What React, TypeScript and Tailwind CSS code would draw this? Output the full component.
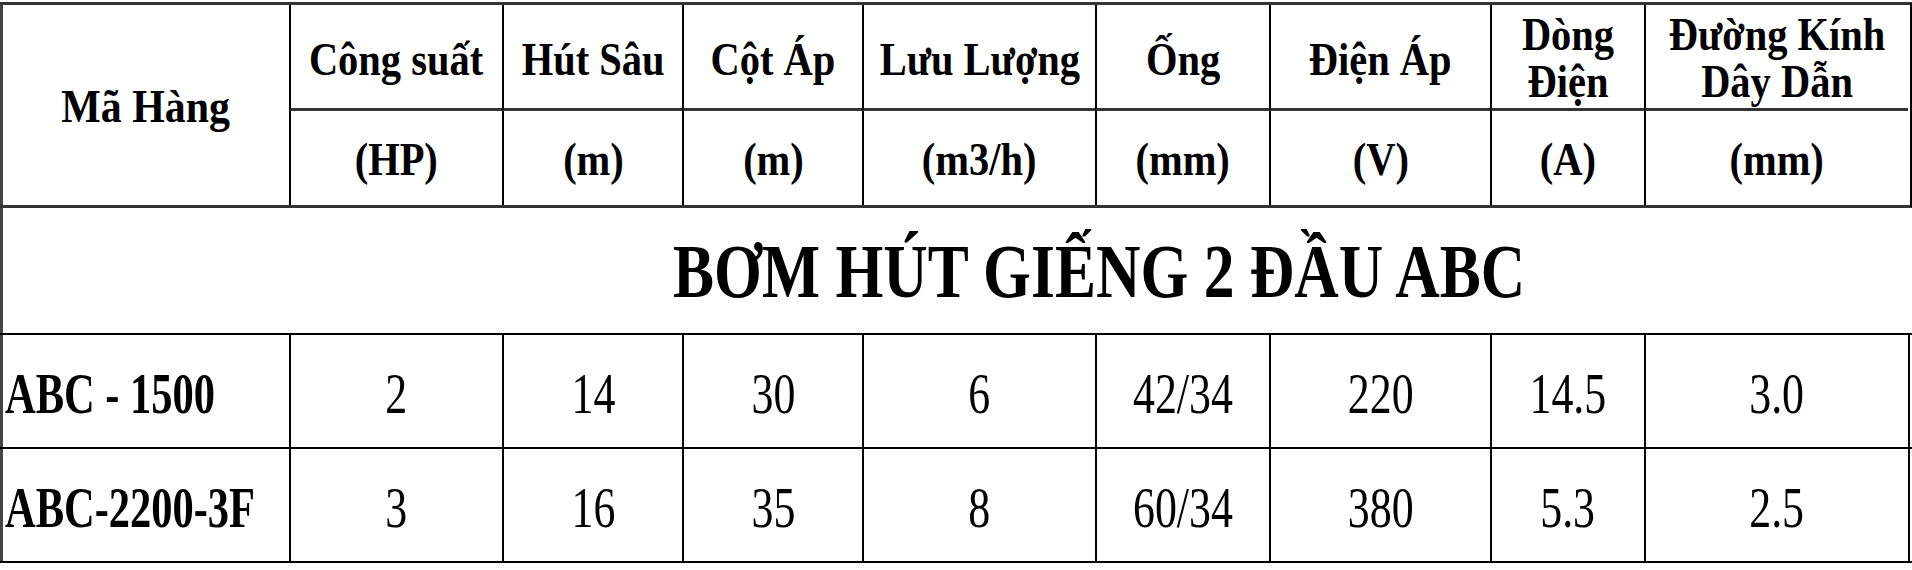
const heads = [
  { name: "Công suất", unit: "(HP)" },
  { name: "Hút Sâu", unit: "(m)" },
  { name: "Cột Áp", unit: "(m)" },
  { name: "Lưu Lượng", unit: "(m3/h)" },
  { name: "Ống", unit: "(mm)" },
  { name: "Điện Áp", unit: "(V)" },
  { name: "Dòng Điện", unit: "(A)", twoLines: true },
  { name: "Đường Kính Dây Dẫn", unit: "(mm)", twoLines: true },
];

const rows = [
  { code: "ABC - 1500", vals: ["2", "14", "30", "6", "42/34", "220", "14.5", "3.0"] },
  { code: "ABC-2200-3F", vals: ["3", "16", "35", "8", "60/34", "380", "5.3", "2.5"] },
];

function HeadText({ children, tall }: { children: React.ReactNode; tall?: boolean }) {
  return (
    <span
      className={`inline-block scale-x-[0.88] text-center text-[46px] font-bold ${tall ? "leading-[47px]" : "leading-[48px]"}`}
    >
      {children}
    </span>
  );
}

export default function App() {
  return (
    <div className="h-[570px] w-[1912px] overflow-hidden bg-white font-['Liberation_Serif',serif] text-black">
      {/* header */}
      <div className="mt-[2px] grid grid-cols-[289px_213px_180px_180px_233px_174px_221px_154px_264px] grid-rows-[106px_94px] border-t-[3px] border-r-2 border-b-[3px] border-[#333] border-r-black">
        <div className="row-span-2 flex items-center justify-center border-l-[3px] border-[#444] pt-[4px]">
          <span className="inline-block scale-x-[0.91] text-[46px] font-bold leading-[48px]">Mã Hàng</span>
        </div>
        {heads.map((h, i) => (
          <div
            key={i}
            className={`flex items-center justify-center border-b-[3px] border-l-2 border-b-[#333] border-l-black ${h.twoLines ? "pt-[2px]" : "pt-[6px]"}`}
          >
            <HeadText tall={h.twoLines}>
              {h.twoLines ? (
                <>
                  {h.name.split(" ").slice(0, 2).join(" ")}
                  <br />
                  {h.name.split(" ").slice(2).join(" ")}
                </>
              ) : (
                h.name
              )}
            </HeadText>
          </div>
        ))}
        {heads.map((h, i) => (
          <div key={i} className="flex items-center justify-center border-l-2 border-black pt-[4px]">
            <HeadText>{h.unit}</HeadText>
          </div>
        ))}
      </div>

      {/* title */}
      <div className="grid h-[127px] grid-cols-[289px_1621px] border-b-2 border-black">
        <div className="border-l-[3px] border-[#444]" />
        <div className="flex items-center justify-center">
          <span className="inline-block scale-x-[0.81] text-[76px] font-bold leading-none">
            BƠM HÚT GIẾNG 2 ĐẦU ABC
          </span>
        </div>
      </div>

      {/* data */}
      {rows.map((r, i) => (
        <div
          key={i}
          className="grid h-[114px] grid-cols-[289px_213px_180px_180px_233px_174px_221px_154px_266px] border-b-2 border-black"
        >
          <div className="flex items-center border-l-[3px] border-[#444] pl-[2px] pt-[4px]">
            <span className="inline-block origin-left scale-x-[0.745] whitespace-nowrap text-[57px] font-bold leading-none">
              {r.code}
            </span>
          </div>
          {r.vals.map((v, j) => (
            <div
              key={j}
              className={`flex items-center justify-center border-l-2 border-black pt-[4px] ${j === 7 ? "border-r-2" : ""}`}
            >
              <span className="inline-block scale-x-[0.77] text-[57px] leading-none">{v}</span>
            </div>
          ))}
        </div>
      ))}
    </div>
  );
}
